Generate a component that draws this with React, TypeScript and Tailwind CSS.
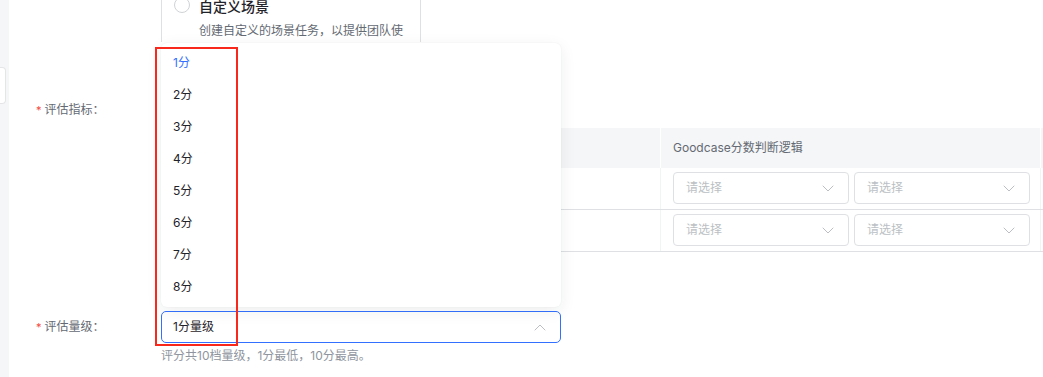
import React from "react";

// 评估配置表单 — 量级下拉展开状态

const FONT = { fontFamily: '"Inter", "Noto Sans CJK SC", sans-serif' };

function Chevron({ up = false }: { up?: boolean }) {
  return (
    <svg width="12" height="7" viewBox="0 0 12 7" fill="none" className="shrink-0">
      <polyline
        points={up ? "1,6 6,1 11,6" : "1,1 6,6 11,1"}
        stroke="#bbbfc4"
        strokeWidth="1"
        strokeLinecap="round"
        strokeLinejoin="round"
      />
    </svg>
  );
}

function SmallSelect() {
  return (
    <div className="w-[176px] h-[32px] border border-[#dee0e3] rounded-[4px] flex items-center justify-between pl-[12px] pr-[14px]">
      <span className="text-[12px] text-[#bbbfc4]">请选择</span>
      <Chevron />
    </div>
  );
}

function Label({ text }: { text: string }) {
  return (
    <div className="w-[152px] shrink-0 pl-[27px] flex items-center h-[32px] text-[12px] text-[#646a73]">
      <span className="text-[#f54a45] mr-[3px] text-[11px]">*</span>
      {text}
    </div>
  );
}

export default function App() {
  const scores = ["1分", "2分", "3分", "4分", "5分", "6分", "7分", "8分"];

  return (
    <div className="flex w-[1043px] h-[377px] overflow-hidden bg-[#f5f6f7]" style={FONT}>
      {/* 左侧灰条 + 折叠按钮 */}
      <div className="relative w-[9px] shrink-0">
        <div className="absolute left-0 top-[67px] w-[6px] h-[37px] bg-white border border-l-0 border-[#e4e5e7] rounded-r-[4px]" />
      </div>

      <div className="relative flex-1 bg-white">
        {/* 场景卡片（顶部被裁切） */}
        <div className="-mt-[12px] ml-[152px] w-[260px] h-[54px] border-x border-[#dee0e3] pt-[8px] px-[12px] flex gap-[9px]">
          <div className="mt-[1px] w-[16px] h-[16px] rounded-full border border-[#d0d3d6] bg-white shrink-0" />
          <div>
            <div className="text-[14px] leading-[22px] font-medium text-[#1f2329]">自定义场景</div>
            <div className="mt-[3px] text-[12px] leading-[20px] text-[#646a73] whitespace-nowrap">
              创建自定义的场景任务，以提供团队使
            </div>
          </div>
        </div>

        {/* 评估指标 */}
        <div className="flex mt-[52px]">
          <Label text="评估指标：" />
          <div className="flex-1">
            <div className="h-[34px]" />
            <div className="w-[900px] text-[12px]">
              <div className="flex h-[40px] bg-[#f5f6f7] text-[#646a73]">
                <div className="w-[500px] border-r border-white" />
                <div className="w-[380px] border-r border-white flex items-center pl-[12px]">
                  Goodcase分数判断逻辑
                </div>
                <div className="flex-1" />
              </div>
              {[0, 1].map((r) => (
                <div key={r} className="flex h-[42px] border-b border-[#dee0e3]">
                  <div className="w-[500px] border-r border-[#f2f3f5]" />
                  <div className="w-[380px] border-r border-[#f2f3f5] flex gap-[5px] pl-[12px] pt-[4px]">
                    <SmallSelect />
                    <SmallSelect />
                  </div>
                  <div className="flex-1" />
                </div>
              ))}
            </div>
          </div>
        </div>

        {/* 评估量级 */}
        <div className="flex mt-[59px]">
          <Label text="评估量级：" />
          <div>
            <div className="w-[400px] h-[32px] border border-[#3370ff] rounded-[5px] flex items-center justify-between pl-[11px] pr-[14px]">
              <span className="text-[12px] text-[#1f2329]">1分量级</span>
              <Chevron up />
            </div>
            <div className="mt-[3px] text-[12px] leading-[20px] text-[#8f959e]">
              评分共10档量级，1分最低，10分最高。
            </div>
          </div>
        </div>

        {/* 下拉菜单 */}
        <div className="absolute left-[152px] top-[43px] w-[400px] h-[264px] bg-white rounded-[6px] py-[4px] shadow-[0_4px_16px_rgba(31,35,41,0.08),0_0_2px_rgba(31,35,41,0.06)]">
          {scores.map((s, i) => (
            <div
              key={s}
              className={`h-[32px] flex items-center px-[12px] text-[12px] ${
                i === 0 ? "text-[#3370ff]" : "text-[#1f2329]"
              }`}
            >
              {s}
            </div>
          ))}
        </div>

        {/* 红色标注框 */}
        <div className="absolute left-[146px] top-[47px] w-[83px] h-[299px] border-2 border-[#f8281c]" />
      </div>
    </div>
  );
}
